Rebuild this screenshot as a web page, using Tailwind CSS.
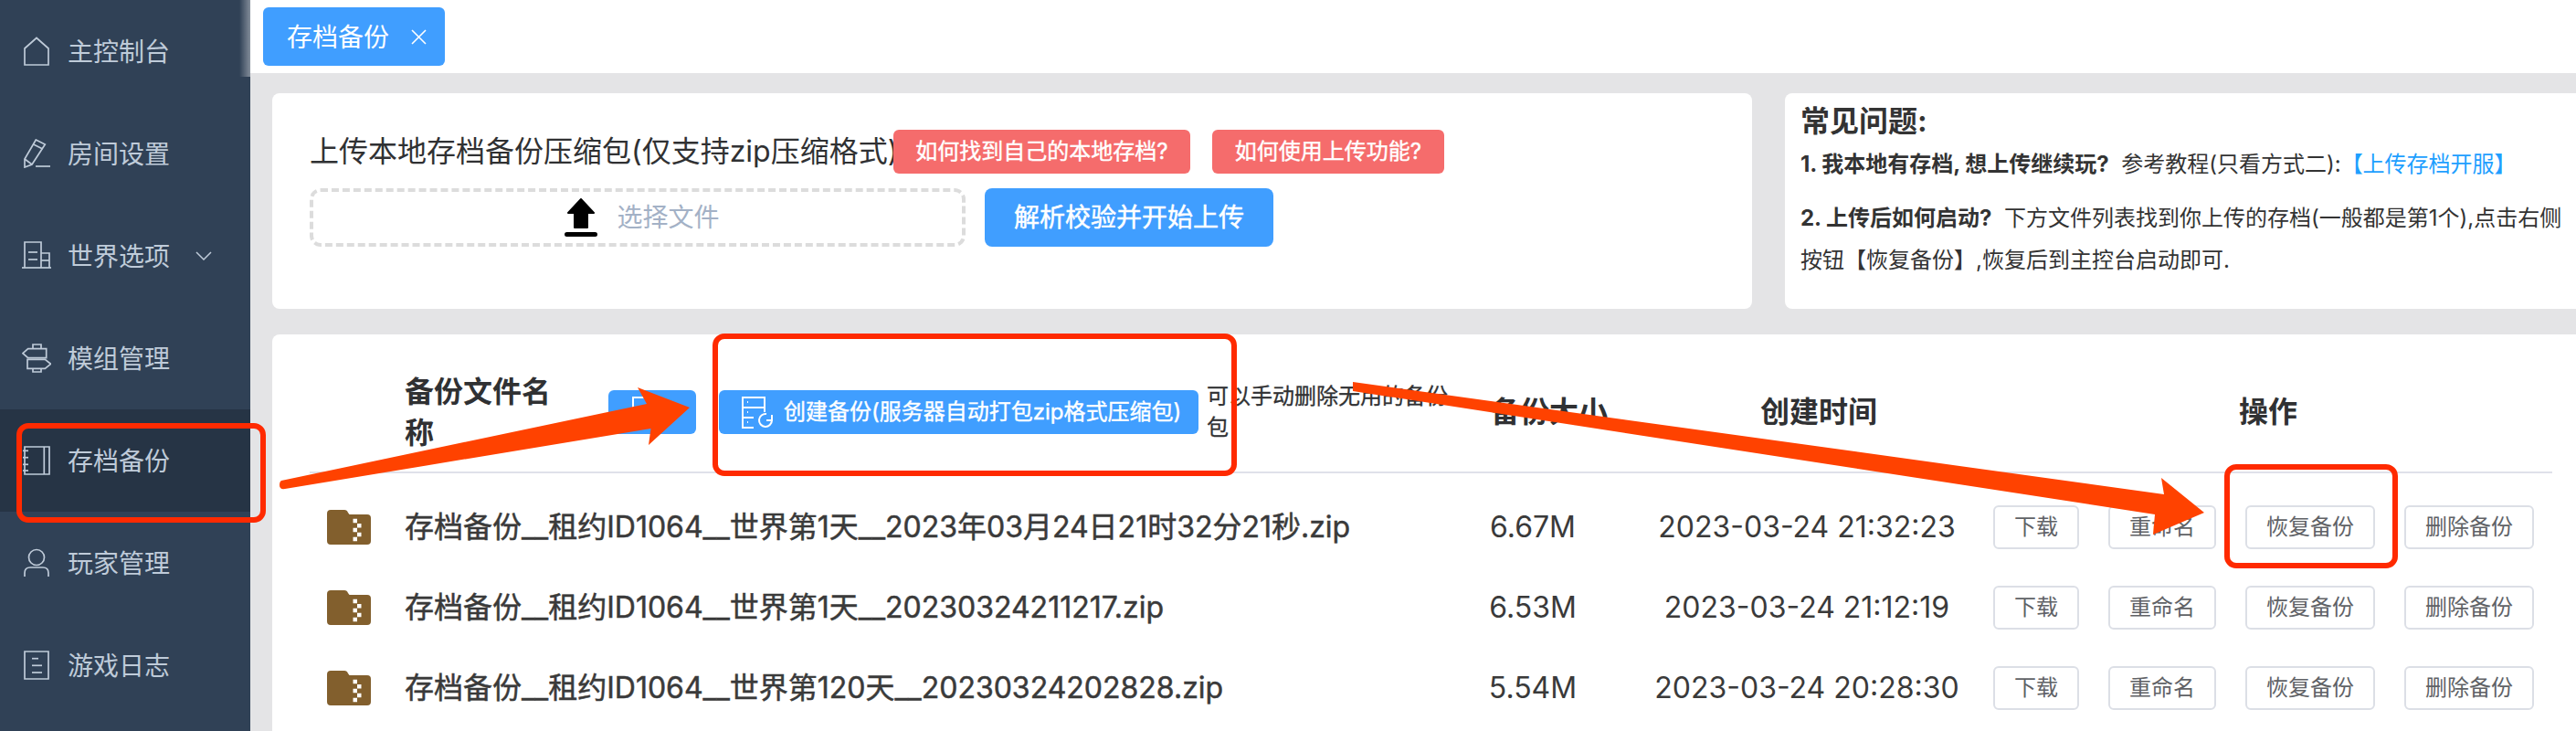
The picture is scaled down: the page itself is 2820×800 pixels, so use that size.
<!DOCTYPE html>
<html lang="zh-CN">
<head>
  <meta charset="UTF-8">
  <meta name="viewport" content="width=device-width, initial-scale=1.0">
  <title>存档备份</title>
  <script src="https://cdn.jsdelivr.net/npm/@tailwindcss/browser@4"></script>
</head>
<body class="font-['Inter','Noto_Sans_CJK_SC',sans-serif]">
  <div class="relative flex w-[2820px] h-[800px] overflow-hidden bg-[#e4e4e6]">

    <!-- sidebar -->
    <aside class="relative w-[274px] shrink-0 bg-[#304156] text-[28px] text-[#bfcbd9]">
      <div class="absolute top-0 right-0 w-[12px] h-[84px] bg-linear-to-r from-transparent to-white/40"></div>
      <a class="flex items-center h-[112px] pl-[24px] gap-[18px]">
        <svg class="w-[32px] h-[32px]" viewBox="0 0 32 32" fill="none" stroke="currentColor" stroke-width="1.7"><path d="M3 31V13L16 1.5L29 13V31Z"/></svg>
        <span class="mt-[2px]">主控制台</span>
      </a>
      <a class="flex items-center h-[112px] pl-[24px] gap-[18px]">
        <svg class="w-[32px] h-[32px]" viewBox="0 0 32 32" fill="none" stroke="currentColor" stroke-width="1.7"><path d="M15.3 1L25.3 6L11 28L3 31V22Z"/><path d="M12.7 6L22.7 11"/><path d="M3 22L11 28"/><path d="M15 30H31"/></svg>
        <span class="mt-[2px]">房间设置</span>
      </a>
      <a class="flex items-center h-[112px] pl-[24px] gap-[18px]">
        <svg class="w-[32px] h-[32px]" viewBox="0 0 32 32" fill="none" stroke="currentColor" stroke-width="1.7"><path d="M0 29H32"/><path d="M3 29V1H21V29"/><path d="M21 13H30V29"/><path d="M7 12H17"/><path d="M7 20H17"/><path d="M21 21H30"/></svg>
        <span class="mt-[2px]">世界选项</span>
        <svg class="w-[18px] h-[10px] ml-[10px]" viewBox="0 0 18 10" fill="none" stroke="currentColor" stroke-width="1.5"><path d="M1 1L9 9L17 1"/></svg>
      </a>
      <a class="flex items-center h-[112px] pl-[24px] gap-[18px]">
        <svg class="w-[32px] h-[32px]" viewBox="0 0 32 32" fill="none" stroke="currentColor" stroke-width="1.7"><path d="M12 5.7V1H21V5.7"/><path d="M1 10.7L6.7 5.7H26.7V15.7H6.7Z"/><path d="M6 17.3H25.3L31.5 22.3L25.3 27.3H6Z"/><path d="M12 27.3V31H21V27.3"/></svg>
        <span class="mt-[2px]">模组管理</span>
      </a>
      <a class="flex items-center h-[112px] pl-[24px] gap-[18px] bg-[#263445]">
        <svg class="w-[32px] h-[32px]" viewBox="0 0 32 32" fill="none" stroke="currentColor" stroke-width="1.7"><path d="M3 1H30V31H3Z"/><path d="M24.3 1V31"/><path d="M1 5.3H7"/><path d="M1 12.7H7"/><path d="M1 20.3H7"/><path d="M1 27H7"/></svg>
        <span class="mt-[2px]">存档备份</span>
      </a>
      <a class="flex items-center h-[112px] pl-[24px] gap-[18px]">
        <svg class="w-[32px] h-[32px]" viewBox="0 0 32 32" fill="none" stroke="currentColor" stroke-width="1.7"><circle cx="16" cy="10" r="8.5"/><path d="M3 31V27Q3 21 9 21H23Q29 21 29 27V31"/></svg>
        <span class="mt-[2px]">玩家管理</span>
      </a>
      <a class="flex items-center h-[112px] pl-[24px] gap-[18px]">
        <svg class="w-[32px] h-[32px]" viewBox="0 0 32 32" fill="none" stroke="currentColor" stroke-width="1.7"><path d="M3 1H29V31H3Z"/><path d="M11 8.7H18"/><path d="M11 16.3H22"/><path d="M11 24H22"/></svg>
        <span class="mt-[2px]">游戏日志</span>
      </a>
    </aside>

    <main class="flex-1 min-w-0 flex flex-col pl-[2px]">
      <!-- tab bar -->
      <div class="h-[80px] shrink-0 -ml-[2px] pl-[14px] pt-[8px] bg-white">
        <div class="flex items-center w-[199px] h-[64px] pl-[26px] gap-[24px] rounded-[6px] bg-[#409eff] text-[28px] text-white">
          <span class="mt-[1px]">存档备份</span>
          <svg class="w-[17px] h-[17px]" viewBox="0 0 17 17" fill="none" stroke="currentColor" stroke-width="1.6"><path d="M1 1L16 16M16 1L1 16"/></svg>
        </div>
      </div>

      <!-- upload + faq -->
      <div class="flex shrink-0 gap-[36px] pl-[22px] pt-[22px]">
        <section class="w-[1620px] h-[236px] rounded-[8px] bg-white pl-[41px] pt-[40px]">
          <div class="flex items-center h-[48px]">
            <h2 class="w-[639px] text-[32px] leading-[48px] text-[#303133] whitespace-nowrap">上传本地存档备份压缩包(仅支持zip压缩格式)</h2>
            <button class="w-[325px] h-[48px] rounded-[6px] bg-[#f56c6c] text-[24px] text-white [-webkit-text-stroke:0.4px_#fff]">如何找到自己的本地存档?</button>
            <button class="w-[254px] h-[48px] ml-[24px] rounded-[6px] bg-[#f56c6c] text-[24px] text-white [-webkit-text-stroke:0.4px_#fff]">如何使用上传功能?</button>
          </div>
          <div class="flex mt-[16px] gap-[21px]">
            <div class="flex items-center justify-center w-[718px] h-[64px] pl-[10px] gap-[21px] rounded-[12px] border-4 border-dashed border-[#dcdcdc]">
              <svg class="w-[36px] h-[43px]" viewBox="0 0 36 43"><path d="M18 1L32 16H25V32H11V16H4Z" fill="#000" stroke="#000" stroke-width="2" stroke-linejoin="round"/><rect x="0" y="37" width="36" height="5" rx="2.5" fill="#000"/></svg>
              <span class="text-[28px] text-[#a3b1c6]">选择文件</span>
            </div>
            <button class="w-[316px] h-[64px] rounded-[8px] bg-[#409eff] text-[28px] text-white [-webkit-text-stroke:0.5px_#fff]">解析校验并开始上传</button>
          </div>
        </section>

        <section class="flex-1 h-[236px] rounded-l-[8px] bg-white pl-[17px] pt-[8px] text-[24px] leading-[46px] text-[#333]">
          <h3 class="text-[32px] leading-[44px] font-bold mt-[1px]">常见问题:</h3>
          <p class="mt-[2px] whitespace-nowrap"><b class="font-bold">1. 我本地有存档, 想上传继续玩?</b>&nbsp; 参考教程(只看方式二):<a class="text-[#1e9fff]">【上传存档开服】</a></p>
          <p class="mt-[13px]"><b class="font-bold">2. 上传后如何启动?</b>&nbsp; 下方文件列表找到你上传的存档(一般都是第1个),点击右侧<br>按钮【恢复备份】,恢复后到主控台启动即可.</p>
        </section>
      </div>

      <!-- backup table -->
      <section class="flex-1 mt-[28px] ml-[22px] rounded-tl-[8px] bg-white pl-[41px] pr-[26px]">
        <div class="flex items-center h-[152px] pt-[20px] border-b-2 border-[#dfe1ea] text-[32px] font-bold text-[#303133]">
          <div class="w-[104px] shrink-0"></div>
          <div class="w-[170px] shrink-0 leading-[45px]">备份文件名称</div>
          <button class="flex items-center w-[96px] h-[48px] ml-[53px] pl-[26px] shrink-0 rounded-[6px] bg-[#409eff] text-white">
            <svg class="w-[36px] h-[35px]" viewBox="0 0 36 35" fill="none" stroke="currentColor" stroke-width="2"><path d="M1 1H25V12H1Z"/><path d="M1 12V34H13"/><path d="M1 23H13"/></svg>
          </button>
          <button class="flex items-center w-[525px] h-[48px] ml-[25px] pl-[25px] gap-[10px] shrink-0 rounded-[6px] bg-[#409eff] text-[24px] font-normal text-white whitespace-nowrap [-webkit-text-stroke:0.4px_#fff]">
            <svg class="w-[36px] h-[35px] shrink-0 [-webkit-text-stroke:0]" viewBox="0 0 36 35" fill="none" stroke="currentColor" stroke-width="2"><path d="M1 1H25V12H1Z"/><path d="M1 12V34H13"/><path d="M1 23H13"/><path d="M25 12V17"/><path d="M6 6H7M6 17H7M6 28H7"/><path d="M33 26A7 7 0 1 1 27 19"/><path d="M33 20V26H27"/></svg>
            <span>创建备份(服务器自动打包zip格式压缩包)</span>
          </button>
          <div class="w-[280px] shrink-0 ml-[9px] text-[24px] leading-[34px] font-normal [-webkit-text-stroke:0.3px_#303133]">可以手动删除无用的备份包</div>
          <div class="w-[190px] shrink-0 text-center">备份大小</div>
          <div class="w-[400px] shrink-0 text-center">创建时间</div>
          <div class="w-[584px] shrink-0 text-center">操作</div>
        </div>

        <div class="pt-[15px]">
          <div class="flex items-center h-[88px] text-[#3a3a3a]">
            <div class="w-[104px] shrink-0 pl-[19px]">
              <svg class="w-[48px] h-[38px]" viewBox="0 0 48 38"><path d="M4 0H19Q22 0 23 3L24.5 5H44Q48 5 48 9V34Q48 38 44 38H4Q0 38 0 34V4Q0 0 4 0Z" fill="#825f2d"/><path d="M28.5 9.7h4.5v4.5h-4.5zM33 15h4.5v4.5H33zM28.5 19.7h4.5v4.5h-4.5zM33 24.7h4.5v4.5H33zM28.5 29.7h4.5v4.5h-4.5z" fill="#fff"/></svg>
            </div>
            <div class="w-[1175px] shrink-0 text-[32px] whitespace-nowrap [-webkit-text-stroke:0.5px_#3a3a3a]">存档备份__租约ID1064__世界第1天__2023年03月24日21时32分21秒.zip</div>
            <div class="w-[120px] shrink-0 text-center text-[32px]">6.67M</div>
            <div class="w-[444px] shrink-0 pl-[36px] text-center text-[32px] whitespace-nowrap">2023-03-24 21:32:23</div>
            <div class="flex gap-[32px] text-[24px] text-[#606266] whitespace-nowrap">
              <button class="w-[94px] h-[48px] rounded-[6px] border-2 border-[#dcdfe6] bg-white">下载</button>
              <button class="w-[118px] h-[48px] rounded-[6px] border-2 border-[#dcdfe6] bg-white">重命名</button>
              <button class="w-[142px] h-[48px] rounded-[6px] border-2 border-[#dcdfe6] bg-white">恢复备份</button>
              <button class="w-[142px] h-[48px] rounded-[6px] border-2 border-[#dcdfe6] bg-white">删除备份</button>
            </div>
          </div>
          <div class="flex items-center h-[88px] text-[#3a3a3a]">
            <div class="w-[104px] shrink-0 pl-[19px]">
              <svg class="w-[48px] h-[38px]" viewBox="0 0 48 38"><path d="M4 0H19Q22 0 23 3L24.5 5H44Q48 5 48 9V34Q48 38 44 38H4Q0 38 0 34V4Q0 0 4 0Z" fill="#825f2d"/><path d="M28.5 9.7h4.5v4.5h-4.5zM33 15h4.5v4.5H33zM28.5 19.7h4.5v4.5h-4.5zM33 24.7h4.5v4.5H33zM28.5 29.7h4.5v4.5h-4.5z" fill="#fff"/></svg>
            </div>
            <div class="w-[1175px] shrink-0 text-[32px] whitespace-nowrap [-webkit-text-stroke:0.5px_#3a3a3a]">存档备份__租约ID1064__世界第1天__20230324211217.zip</div>
            <div class="w-[120px] shrink-0 text-center text-[32px]">6.53M</div>
            <div class="w-[444px] shrink-0 pl-[36px] text-center text-[32px] whitespace-nowrap">2023-03-24 21:12:19</div>
            <div class="flex gap-[32px] text-[24px] text-[#606266] whitespace-nowrap">
              <button class="w-[94px] h-[48px] rounded-[6px] border-2 border-[#dcdfe6] bg-white">下载</button>
              <button class="w-[118px] h-[48px] rounded-[6px] border-2 border-[#dcdfe6] bg-white">重命名</button>
              <button class="w-[142px] h-[48px] rounded-[6px] border-2 border-[#dcdfe6] bg-white">恢复备份</button>
              <button class="w-[142px] h-[48px] rounded-[6px] border-2 border-[#dcdfe6] bg-white">删除备份</button>
            </div>
          </div>
          <div class="flex items-center h-[88px] text-[#3a3a3a]">
            <div class="w-[104px] shrink-0 pl-[19px]">
              <svg class="w-[48px] h-[38px]" viewBox="0 0 48 38"><path d="M4 0H19Q22 0 23 3L24.5 5H44Q48 5 48 9V34Q48 38 44 38H4Q0 38 0 34V4Q0 0 4 0Z" fill="#825f2d"/><path d="M28.5 9.7h4.5v4.5h-4.5zM33 15h4.5v4.5H33zM28.5 19.7h4.5v4.5h-4.5zM33 24.7h4.5v4.5H33zM28.5 29.7h4.5v4.5h-4.5z" fill="#fff"/></svg>
            </div>
            <div class="w-[1175px] shrink-0 text-[32px] whitespace-nowrap [-webkit-text-stroke:0.5px_#3a3a3a]">存档备份__租约ID1064__世界第120天__20230324202828.zip</div>
            <div class="w-[120px] shrink-0 text-center text-[32px]">5.54M</div>
            <div class="w-[444px] shrink-0 pl-[36px] text-center text-[32px] whitespace-nowrap">2023-03-24 20:28:30</div>
            <div class="flex gap-[32px] text-[24px] text-[#606266] whitespace-nowrap">
              <button class="w-[94px] h-[48px] rounded-[6px] border-2 border-[#dcdfe6] bg-white">下载</button>
              <button class="w-[118px] h-[48px] rounded-[6px] border-2 border-[#dcdfe6] bg-white">重命名</button>
              <button class="w-[142px] h-[48px] rounded-[6px] border-2 border-[#dcdfe6] bg-white">恢复备份</button>
              <button class="w-[142px] h-[48px] rounded-[6px] border-2 border-[#dcdfe6] bg-white">删除备份</button>
            </div>
          </div>
        </div>
      </section>
    </main>

    <!-- hand-drawn annotations on top of the screenshot -->
    <svg class="absolute top-0 left-0 w-[2820px] h-[800px] pointer-events-none" viewBox="0 0 2820 800" fill="none">
      <rect x="21" y="466" width="267" height="103" rx="10" stroke="#ff2a00" stroke-width="6"/>
      <rect x="783" y="368" width="568" height="150" rx="10" stroke="#ff2a00" stroke-width="6"/>
      <rect x="2438" y="511" width="184" height="108" rx="10" stroke="#ff2a00" stroke-width="6"/>
      <path d="M308 526L708 442L698 424L755 446L710 487L712.5 469L312 535Q306 536 306 531Q306 527 308 526Z" fill="#ff4200"/>
      <path d="M1481 418L2369 541L2366 523L2413 561L2357 585L2359 563L1481 428Z" fill="#ff4200"/>
    </svg>
  </div>
</body>
</html>
